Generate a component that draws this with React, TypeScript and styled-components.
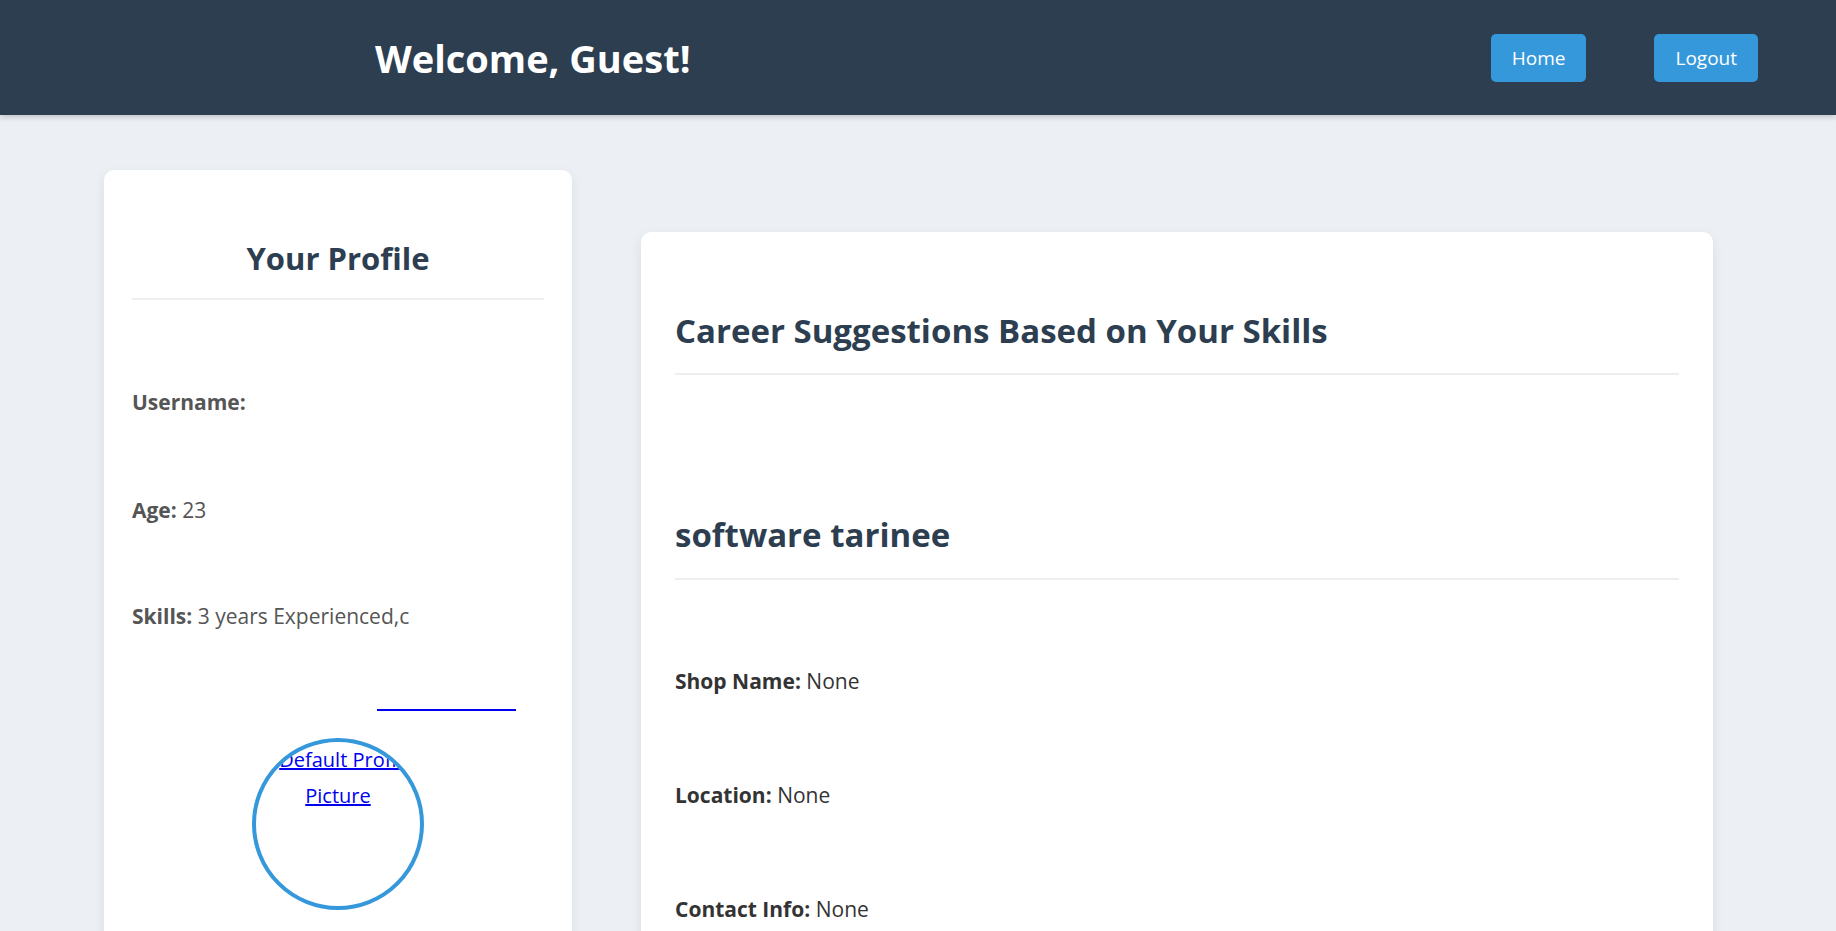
import React from "react";
import styled, { createGlobalStyle } from "styled-components";

const GlobalStyle = createGlobalStyle`
  html { scrollbar-width: none; }
  html::-webkit-scrollbar { display: none; }
  body {
    margin: 0;
    background: #ecf0f4;
    font-family: "Open Sans", "Noto Sans", sans-serif;
  }
  * { box-sizing: border-box; }
`;

const Header = styled.header`
  height: 115px;
  background: #2c3e50;
  box-shadow: 0 2px 6px rgba(0, 0, 0, 0.2);
  display: flex;
  align-items: center;
  justify-content: space-between;
  padding: 0 78px 0 375px;
`;

const HeaderTitle = styled.h1`
  margin: 0;
  font-size: 38px;
  font-weight: 700;
  color: #ffffff;
`;

const Nav = styled.nav`
  display: flex;
  gap: 68px;
`;

const NavButton = styled.button`
  background: #3498db;
  color: #ffffff;
  border: none;
  border-radius: 5px;
  height: 48px;
  padding: 0 21px;
  font-family: inherit;
  font-size: 19px;
  cursor: pointer;
`;

const Main = styled.main`
  display: flex;
  align-items: flex-start;
  gap: 69px;
  padding: 55px 0 0 104px;
`;

const Card = styled.section<{ $width: number; $offset: number; $pad: number }>`
  width: ${(p) => p.$width}px;
  margin-top: ${(p) => p.$offset}px;
  padding: 0 ${(p) => p.$pad}px 40px;
  background: #ffffff;
  border-radius: 10px;
  box-shadow: 0 4px 12px rgba(0, 0, 0, 0.08);
`;

const CardTitle = styled.h2<{ $center?: boolean; $top: number; $bottom: number; $size: number }>`
  margin: ${(p) => p.$top}px 0 0;
  padding-bottom: ${(p) => p.$bottom}px;
  border-bottom: 2px solid #eeeeee;
  text-align: ${(p) => (p.$center ? "center" : "left")};
  font-size: ${(p) => p.$size}px;
  line-height: 44px;
  font-weight: 700;
  color: #2c3e50;
`;

const InfoRow = styled.p<{ $gap: number; $tone: "gray" | "dark" }>`
  margin: ${(p) => p.$gap}px 0 0;
  font-size: 21px;
  line-height: 28px;
  color: ${(p) => (p.$tone === "gray" ? "#555555" : "#333333")};
  strong { font-weight: 700; }
`;

const LinkLine = styled.div`
  margin-top: 79px;
  padding-left: 245px;
  height: 2px;
`;

const EmptyLink = styled.a`
  display: block;
  width: 139px;
  height: 2px;
  background: #0000ee;
`;

const Avatar = styled.div`
  width: 172px;
  height: 172px;
  margin: 27px auto 0;
  border: 4px solid #3498db;
  border-radius: 50%;
  overflow: hidden;
  text-align: center;
  font-size: 20px;
  line-height: 36px;
  a {
    color: #0000ee;
    text-decoration: underline;
  }
`;

const BrokenIcon = styled.span`
  float: left;
  width: 16px;
  height: 16px;
  border: 1px solid #aaaaaa;
`;

export default function App() {
  return (
    <>
      <GlobalStyle />
      <Header>
        <HeaderTitle>Welcome, Guest!</HeaderTitle>
        <Nav>
          <NavButton>Home</NavButton>
          <NavButton>Logout</NavButton>
        </Nav>
      </Header>
      <Main>
        <Card $width={468} $offset={0} $pad={28}>
          <CardTitle $center $top={66} $bottom={18} $size={31}>Your Profile</CardTitle>
          <InfoRow $gap={88} $tone="gray"><strong>Username:</strong></InfoRow>
          <InfoRow $gap={80} $tone="gray"><strong>Age:</strong> 23</InfoRow>
          <InfoRow $gap={78} $tone="gray"><strong>Skills:</strong> 3 years Experienced,c</InfoRow>
          <LinkLine><EmptyLink href="#" aria-label="edit" /></LinkLine>
          <Avatar>
            <BrokenIcon />
            <a href="#">Default Profile Picture</a>
          </Avatar>
        </Card>
        <Card $width={1072} $offset={62} $pad={34}>
          <CardTitle $top={77} $bottom={20} $size={33}>Career Suggestions Based on Your Skills</CardTitle>
          <CardTitle $top={138} $bottom={21} $size={33}>software tarinee</CardTitle>
          <InfoRow $gap={87} $tone="dark"><strong>Shop Name:</strong> None</InfoRow>
          <InfoRow $gap={86} $tone="dark"><strong>Location:</strong> None</InfoRow>
          <InfoRow $gap={86} $tone="dark"><strong>Contact Info:</strong> None</InfoRow>
        </Card>
      </Main>
    </>
  );
}
